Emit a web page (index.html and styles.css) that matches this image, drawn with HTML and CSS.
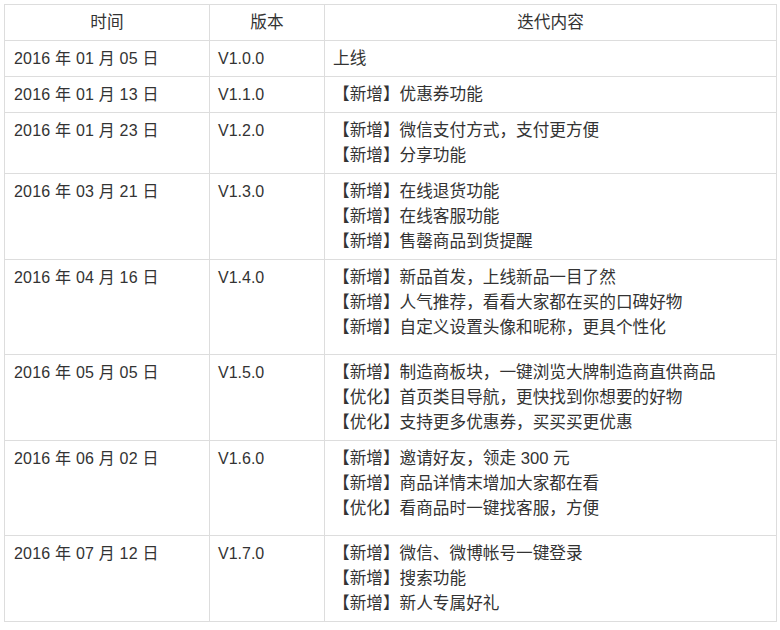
FILE: index.html
```html
<!DOCTYPE html>
<html lang="zh-CN">
<head>
<meta charset="utf-8">
<title>版本迭代</title>
<link rel="stylesheet" href="styles.css">
</head>
<body>
<div class="page">
<table class="log">
<colgroup>
<col class="c-date">
<col class="c-ver">
<col class="c-desc">
</colgroup>
<thead>
<tr><th>时间</th><th>版本</th><th>迭代内容</th></tr>
</thead>
<tbody>
<tr><td class="date">2016 年 01 月 05 日</td><td>V1.0.0</td><td class="desc">上线</td></tr>
<tr><td class="date">2016 年 01 月 13 日</td><td>V1.1.0</td><td class="desc">【新增】优惠券功能</td></tr>
<tr><td class="date">2016 年 01 月 23 日</td><td>V1.2.0</td><td class="desc">【新增】微信支付方式，支付更方便<br>【新增】分享功能</td></tr>
<tr><td class="date">2016 年 03 月 21 日</td><td>V1.3.0</td><td class="desc">【新增】在线退货功能<br>【新增】在线客服功能<br>【新增】售罄商品到货提醒</td></tr>
<tr class="extra"><td class="date">2016 年 04 月 16 日</td><td>V1.4.0</td><td class="desc">【新增】新品首发，上线新品一目了然<br>【新增】人气推荐，看看大家都在买的口碑好物<br>【新增】自定义设置头像和昵称，更具个性化</td></tr>
<tr><td class="date">2016 年 05 月 05 日</td><td>V1.5.0</td><td class="desc">【新增】制造商板块，一键浏览大牌制造商直供商品<br>【优化】首页类目导航，更快找到你想要的好物<br>【优化】支持更多优惠券，买买买更优惠</td></tr>
<tr class="extra"><td class="date">2016 年 06 月 02 日</td><td>V1.6.0</td><td class="desc">【新增】邀请好友，领走 300 元<br>【新增】商品详情末增加大家都在看<br>【优化】看商品时一键找客服，方便</td></tr>
<tr><td class="date">2016 年 07 月 12 日</td><td>V1.7.0</td><td class="desc">【新增】微信、微博帐号一键登录<br>【新增】搜索功能<br>【新增】新人专属好礼</td></tr>
</tbody>
</table>
</div>
</body>
</html>
```
FILE: styles.css
```css
html, body {
  margin: 0;
  padding: 0;
  background: #fff;
}
.page {
  padding: 4px;
}
.log {
  border-collapse: collapse;
  table-layout: fixed;
  width: 772px;
  font-family: "Liberation Sans", "Noto Sans CJK SC", sans-serif;
  font-size: 16px;
  line-height: 25px;
  color: #333;
}
.c-date { width: 205px; }
.c-ver { width: 115px; }
.c-desc { width: 452px; }
.log th,
.log td {
  border: 1px solid #ddd;
  padding: 5px 8px;
  vertical-align: top;
  text-align: left;
}
.log th {
  font-weight: normal;
  font-size: 16.65px;
  text-align: center;
}
.log .date {
  padding-left: 9px;
  letter-spacing: 0.2px;
}
.log .desc {
  font-size: 16.65px;
}
.log .extra td {
  padding-bottom: 14px;
}
```
